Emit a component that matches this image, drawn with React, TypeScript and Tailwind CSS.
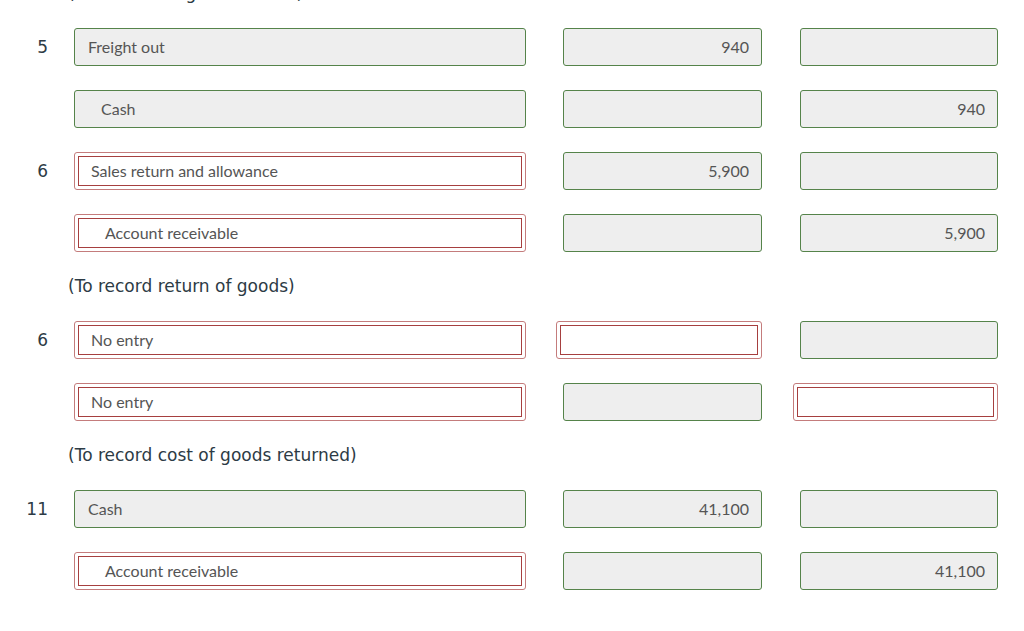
import React from "react";

type Row = {
  num?: string;
  account: { text: string; ok: boolean; credit?: boolean };
  debit: { text?: string; ok: boolean };
  credit: { text?: string; ok: boolean };
};

type Item = { type: "label"; text: string } | { type: "row"; row: Row };

const items: Item[] = [
  { type: "label", text: "(To record freight out costs)" },
  {
    type: "row",
    row: {
      num: "5",
      account: { text: "Freight out", ok: true },
      debit: { text: "940", ok: true },
      credit: { ok: true },
    },
  },
  {
    type: "row",
    row: {
      account: { text: "Cash", ok: true, credit: true },
      debit: { ok: true },
      credit: { text: "940", ok: true },
    },
  },
  {
    type: "row",
    row: {
      num: "6",
      account: { text: "Sales return and allowance", ok: false },
      debit: { text: "5,900", ok: true },
      credit: { ok: true },
    },
  },
  {
    type: "row",
    row: {
      account: { text: "Account receivable", ok: false, credit: true },
      debit: { ok: true },
      credit: { text: "5,900", ok: true },
    },
  },
  { type: "label", text: "(To record return of goods)" },
  {
    type: "row",
    row: {
      num: "6",
      account: { text: "No entry", ok: false },
      debit: { ok: false },
      credit: { ok: true },
    },
  },
  {
    type: "row",
    row: {
      account: { text: "No entry", ok: false },
      debit: { ok: true },
      credit: { ok: false },
    },
  },
  { type: "label", text: "(To record cost of goods returned)" },
  {
    type: "row",
    row: {
      num: "11",
      account: { text: "Cash", ok: true },
      debit: { text: "41,100", ok: true },
      credit: { ok: true },
    },
  },
  {
    type: "row",
    row: {
      account: { text: "Account receivable", ok: false, credit: true },
      debit: { ok: true },
      credit: { text: "41,100", ok: true },
    },
  },
];

const lato = { fontFamily: "Lato, 'Open Sans', sans-serif" };
const dejavu = { fontFamily: "'DejaVu Sans', Verdana, sans-serif" };

function AccountBox({ text, ok, credit }: { text: string; ok: boolean; credit?: boolean }) {
  if (ok) {
    return (
      <div
        className={`h-[38px] w-[452px] rounded-[3px] border border-[#55834a] bg-[#eeeeee] flex items-center text-[16px] text-[#555555] ${
          credit ? "pl-[26px]" : "pl-[13px]"
        }`}
        style={lato}
      >
        {text}
      </div>
    );
  }
  return (
    <div className="h-[38px] w-[452px] rounded-[3px] border border-[#c47c7c] bg-white p-[3px]">
      <div
        className={`h-full w-full border border-[#a63f3f] bg-white flex items-center text-[16px] text-[#555555] ${
          credit ? "pl-[26px]" : "pl-[12px]"
        }`}
        style={lato}
      >
        {text}
      </div>
    </div>
  );
}

function AmountBox({ text, ok, wide }: { text?: string; ok: boolean; wide: boolean }) {
  if (ok) {
    return (
      <div
        className={`h-[38px] rounded-[3px] border border-[#55834a] bg-[#eeeeee] flex items-center justify-end pr-[12px] text-[16px] text-[#555555] ${
          wide ? "w-[199px]" : "w-[198px]"
        }`}
        style={lato}
      >
        {text}
      </div>
    );
  }
  return (
    <div
      className={`-ml-[7px] h-[38px] rounded-[3px] border border-[#c47c7c] bg-white p-[3px] ${
        wide ? "w-[206px]" : "w-[205px]"
      }`}
    >
      <div className="h-full w-full border border-[#a63f3f] bg-white" />
    </div>
  );
}

function EntryRow({ row }: { row: Row }) {
  return (
    <div className="flex items-center h-[38px]">
      <div className="w-[48px] text-right text-[17px] text-[#2d3b45] leading-none" style={dejavu}>
        {row.num ?? ""}
      </div>
      <div className="ml-[26px]">
        <AccountBox {...row.account} />
      </div>
      <div className="ml-[37px] w-[199px]">
        <AmountBox text={row.debit.text} ok={row.debit.ok} wide={true} />
      </div>
      <div className="ml-[38px] w-[198px]">
        <AmountBox text={row.credit.text} ok={row.credit.ok} wide={false} />
      </div>
    </div>
  );
}

export default function App() {
  return (
    <div className="w-[1024px] h-[631px] overflow-hidden bg-white">
      <div className="-mt-[17px] flex flex-col gap-[24px]">
        {items.map((it, i) =>
          it.type === "label" ? (
            <div
              key={i}
              className="h-[21px] pl-[68px] text-[17px] leading-[21px] text-[#2d3b45]"
              style={dejavu}
            >
              {it.text}
            </div>
          ) : (
            <EntryRow key={i} row={it.row} />
          )
        )}
      </div>
    </div>
  );
}
